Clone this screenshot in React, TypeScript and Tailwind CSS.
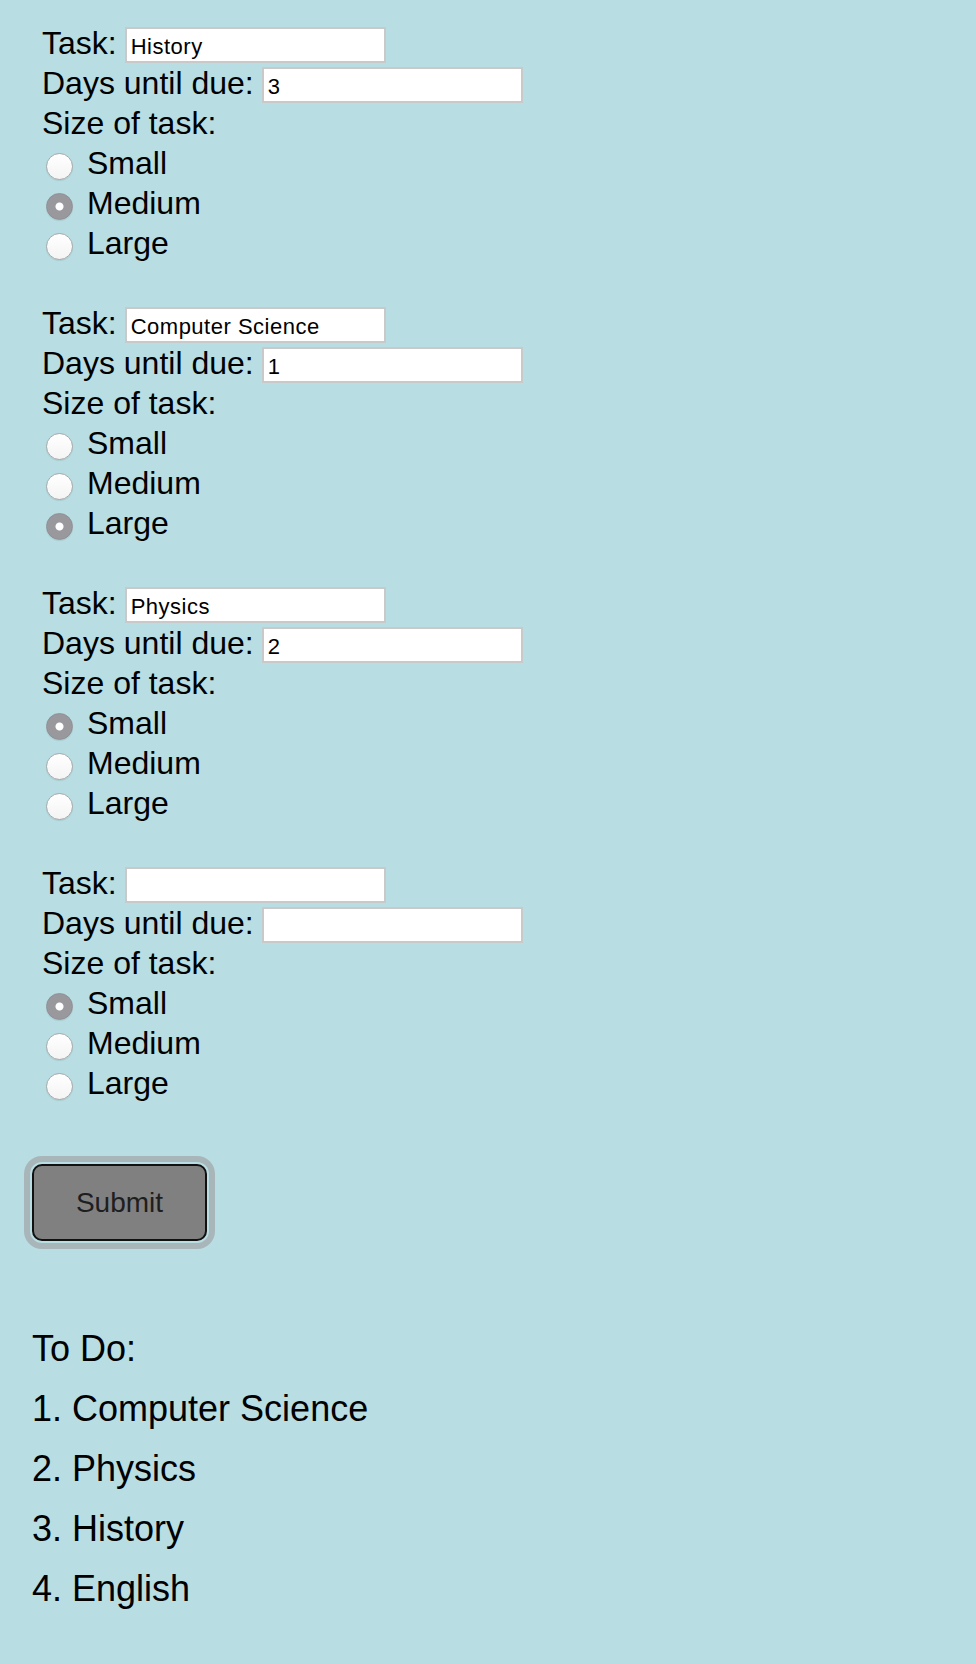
import React, { useState } from 'react';

type Size = 'Small' | 'Medium' | 'Large';

interface Task {
  name: string;
  days: string;
  size: Size;
}

const SIZES: Size[] = ['Small', 'Medium', 'Large'];

const initialTasks: Task[] = [
  { name: 'History', days: '3', size: 'Medium' },
  { name: 'Computer Science', days: '1', size: 'Large' },
  { name: 'Physics', days: '2', size: 'Small' },
  { name: '', days: '', size: 'Small' },
];

const TaskForm: React.FC<{ index: number; task: Task; onChange: (t: Task) => void }> = ({ index, task, onChange }) => {
  return (
    <div className="flex flex-col">
      <div className="flex h-[40px] items-center">
        <span className="pb-[4px] text-[32px] leading-[40px]">Task:</span>
        <input
          type="text"
          value={task.name}
          onChange={(e) => onChange({ ...task, name: e.target.value })}
          className="ml-[8px] h-[36px] w-[261px] border-2 border-[#c9c9c9] bg-white pl-[4px] pt-[4px] text-[22px] tracking-[0.5px] text-black outline-none"
        />
      </div>
      <div className="flex h-[40px] items-center">
        <span className="pb-[4px] text-[32px] leading-[40px]">Days until due:</span>
        <input
          type="text"
          value={task.days}
          onChange={(e) => onChange({ ...task, days: e.target.value })}
          className="ml-[8px] h-[36px] w-[261px] border-2 border-[#c9c9c9] bg-white pl-[4px] pt-[4px] text-[22px] tracking-[0.5px] text-black outline-none"
        />
      </div>
      <div className="flex h-[40px] items-center">
        <span className="pb-[4px] text-[32px] leading-[40px]">Size of task:</span>
      </div>
      {SIZES.map((s) => (
        <label key={s} className="flex h-[40px] items-center pl-[4px]">
          <input
            type="radio"
            name={`size-${index}`}
            checked={task.size === s}
            onChange={() => onChange({ ...task, size: s })}
            className="mt-[2px] h-[27px] w-[27px] appearance-none rounded-full border border-[#a9a9a9] bg-[linear-gradient(#ffffff,#f4f4f4)] shadow-[0_1px_1px_rgba(0,0,0,0.08)] checked:border-[#8f8e93] checked:bg-[radial-gradient(circle,#ffffff_0,#ffffff_3.5px,#99989d_4.5px)]"
          />
          <span className="ml-[14px] pb-[4px] text-[32px] leading-[40px]">{s}</span>
        </label>
      ))}
    </div>
  );
};

export default function App() {
  const [tasks, setTasks] = useState<Task[]>(initialTasks);
  const [todo] = useState<string[]>(['Computer Science', 'Physics', 'History', 'English']);

  const updateTask = (i: number, t: Task) => {
    setTasks((prev) => prev.map((p, j) => (j === i ? t : p)));
  };

  return (
    <div className="min-h-screen bg-[#b8dde3] px-[32px] pt-[25px] font-['Liberation_Sans',Arial,sans-serif] text-black">
      <div className="flex flex-col gap-[40px] pl-[10px]">
        {tasks.map((t, i) => (
          <TaskForm key={i} index={i} task={t} onChange={(nt) => updateTask(i, nt)} />
        ))}
      </div>

      <button
        type="button"
        className="mt-[59px] h-[77px] w-[175px] rounded-[10px] border-2 border-[#111111] bg-[#808080] text-[28px] text-[#1e1e1e] shadow-[0_0_0_2px_#b8dde3,0_0_0_8px_#a8b5b9]"
      >
        Submit
      </button>

      <div className="mt-[78px] flex flex-col text-[36px] leading-[60px]">
        <p>To Do:</p>
        {todo.map((name, i) => (
          <p key={name}>
            {i + 1}. {name}
          </p>
        ))}
      </div>
    </div>
  );
}
